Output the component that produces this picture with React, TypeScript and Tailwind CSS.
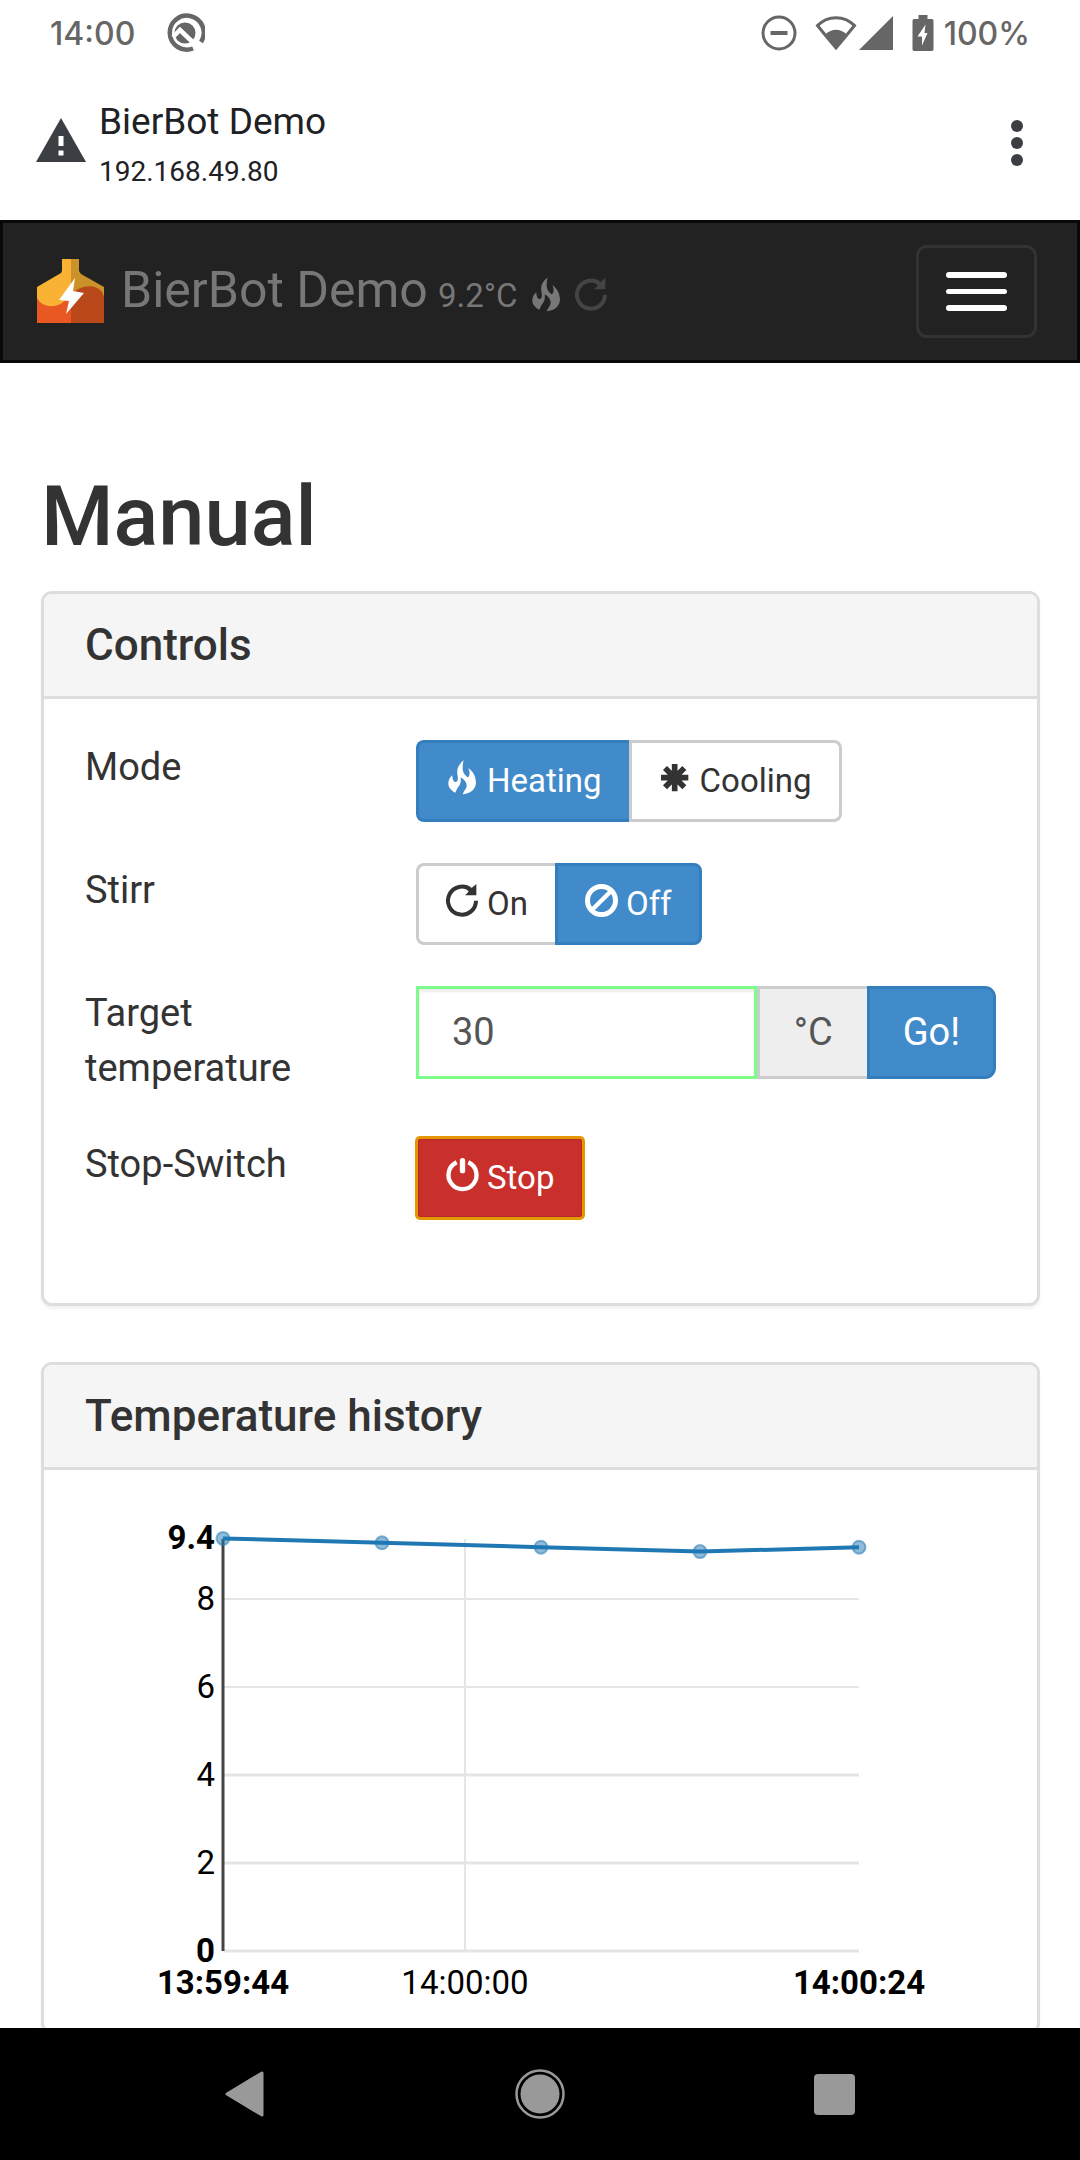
import { useState } from "react";
import type { ReactNode } from "react";

function FireIcon({ className }: { className: string }) {
  return (
    <svg viewBox="0 0 99 99" className={className} fill="currentColor" aria-hidden="true">
      <path
        transform="translate(7 -2)"
        d="M46 0C30 13 25 26 27 41C29 54 30 59 25 64C19 68 12 62 12 45C4 52 0 60 0 71C1 83 9 91 21 97C24 90 27 83 32 77C38 69 38 61 37 51C46 56 56 66 55 78C54 86 47 91 43 102C70 100 83 84 83 66C82 48 76 36 60 23C66 37 64 46 59 51C50 47 43 36 43 24C43 14 44 8 46 0Z"
      />
    </svg>
  );
}

function RepeatIcon({ className }: { className: string }) {
  return (
    <svg viewBox="0 0 99 99" className={className} aria-hidden="true">
      <path d="M90 50A42 42 0 1 1 74 17" fill="none" stroke="currentColor" strokeWidth="12" />
      <path d="M91 0V34H57L68 23L62 15L76 13Z" fill="currentColor" />
    </svg>
  );
}

function AsteriskIcon({ className }: { className: string }) {
  return (
    <svg viewBox="0 0 99 99" className={className} aria-hidden="true">
      <path d="M47 9V91M6 50H88M18 21L76 79M76 21L18 79" fill="none" stroke="currentColor" strokeWidth="17" />
    </svg>
  );
}

function BanIcon({ className }: { className: string }) {
  return (
    <svg viewBox="0 0 99 99" className={className} fill="none" stroke="currentColor" aria-hidden="true">
      <circle cx="49.5" cy="49.5" r="42" strokeWidth="15" />
      <path d="M20 79L79 20" strokeWidth="13" />
    </svg>
  );
}

function PowerIcon({ className }: { className: string }) {
  return (
    <svg viewBox="0 0 99 99" className={className} fill="none" stroke="currentColor" aria-hidden="true">
      <path d="M32 13A42 42 0 1 0 67 13" strokeWidth="13" />
      <path d="M49.5 8V38" strokeWidth="16" strokeLinecap="round" />
    </svg>
  );
}

function BrandLogo() {
  return (
    <svg viewBox="0 0 69 64" className="mb-0.5 h-16 w-[69px]" aria-hidden="true">
      <path d="M26 0H35V64H1V28L25 14L26 12Z" fill="#f9b234" />
      <path d="M35 0H43V12L45 15L68 28V64H35Z" fill="#ca9229" />
      <path d="M1 39C5 47 16 50 26 44L35 36V64H1Z" fill="#e95722" />
      <path d="M35 35C43 28 57 23 66 33L68 38V64H35Z" fill="#b9481a" />
      <path d="M39 19L23 41L33 42L30 55L48 34L37 32Z" fill="#fff" />
    </svg>
  );
}

function StatusBar() {
  return (
    <div className="flex h-[66px] shrink-0 items-center justify-between px-[50px] pt-0.5 font-[Inter,sans-serif] text-[32px] font-medium text-[#666]">
      <div className="flex items-center gap-[30px]">
        <span>14:00</span>
        <svg viewBox="0 0 40 40" className="mb-0.5 size-10" fill="none" aria-hidden="true">
          <path d="M36 29A17 17 0 1 0 28 35.5" stroke="#666" strokeWidth="4.5" />
          <circle cx="20" cy="20" r="10.5" fill="#666" />
          <path d="M8 24L15 17L36 37" stroke="#fff" strokeWidth="4.5" />
        </svg>
      </div>
      <div className="flex items-center">
        <svg viewBox="0 0 36 36" className="mb-0.5 size-9" fill="none" stroke="#666" aria-hidden="true">
          <circle cx="18" cy="18" r="16" strokeWidth="3" />
          <path d="M9.5 18H26.5" strokeWidth="4" />
        </svg>
        <svg viewBox="0 0 42 36" className="mb-0.5 ml-[18px] h-9 w-[42px]" aria-hidden="true">
          <path d="M2.5 10.5C13 0 29 0 39.5 10.5L31 21L21 33L11 21Z" fill="none" stroke="#666" strokeWidth="3" />
          <path d="M10 19.5C17 13 25 13 32 19.5L21 34Z" fill="#666" />
        </svg>
        <svg viewBox="0 0 36 36" className="mb-0.5 ml-px size-9" fill="#666" aria-hidden="true">
          <path d="M35 1V35H1Z" />
        </svg>
        <svg viewBox="0 0 22 36" className="mb-0.5 ml-[18px] h-9 w-[22px]" aria-hidden="true">
          <path d="M6.5 0H15.5V4H20Q21.5 4 21.5 6V34Q21.5 36 20 36H2Q.5 36 .5 34V6Q.5 4 2 4H6.5Z" fill="#666" />
          <path d="M13.5 9.5L5.5 21.5H10V30.5L15.5 18H12.5Z" fill="#fff" />
        </svg>
        <span className="ml-2.5">100%</span>
      </div>
    </div>
  );
}

function BrowserBar() {
  return (
    <div className="flex h-[154px] shrink-0 items-center pl-9 pr-7">
      <svg viewBox="0 0 50 44" className="mb-1.5 h-11 w-[50px]" aria-hidden="true">
        <path d="M25 0L50 44H0Z" fill="#3b3e43" />
        <path d="M22.5 18H27.5V28H22.5ZM22.5 32.5H27.5V37.5H22.5Z" fill="#fff" />
      </svg>
      <div className="ml-[13px] flex-1 pt-2 text-[#202124]">
        <div className="text-[37px] leading-[50px]">BierBot Demo</div>
        <div className="text-[28px] leading-[50px]">192.168.49.80</div>
      </div>
      <button type="button" aria-label="More options" className="flex w-[70px] flex-col items-center gap-[5px]">
        <span className="size-3 rounded-full bg-[#3b3e43]" />
        <span className="size-3 rounded-full bg-[#3b3e43]" />
        <span className="size-3 rounded-full bg-[#3b3e43]" />
      </button>
    </div>
  );
}

function Navbar() {
  return (
    <nav className="flex h-[143px] shrink-0 items-center justify-between border-[3px] border-[#080808] bg-[#222] pl-[33px] pr-10">
      <a href="#" className="flex items-center text-[#777]">
        <BrandLogo />
        <span className="ml-4 flex items-baseline">
          <span className="text-[50px] leading-[55px]">BierBot Demo</span>
          <span className="ml-2.5 text-[33px]">9.2°C</span>
          <FireIcon className="ml-3 size-[33px] translate-y-1 overflow-visible" />
          <RepeatIcon className="ml-3 size-[33px] translate-y-1 text-[#444]" />
        </span>
      </a>
      <button
        type="button"
        aria-label="Toggle navigation"
        className="flex flex-col gap-[11px] rounded-[11px] border-[3px] border-[#333] px-[27px] py-6"
      >
        <span className="h-1.5 w-[61px] rounded-sm bg-white" />
        <span className="h-[5px] w-[61px] rounded-sm bg-white" />
        <span className="h-1.5 w-[61px] rounded-sm bg-white" />
      </button>
    </nav>
  );
}

function Panel({ title, children }: { title: string; children: ReactNode }) {
  return (
    <section className="rounded-[11px] border-[3px] border-[#ddd] bg-white shadow-[0_3px_3px_rgba(0,0,0,0.05)]">
      <h2 className="rounded-t-lg border-b-[3px] border-[#ddd] bg-[#f5f5f5] px-[41px] py-[27px] text-[44px] font-medium leading-[48px]">
        {title}
      </h2>
      {children}
    </section>
  );
}

function Row({ label, htmlFor, children }: { label: string; htmlFor?: string; children: ReactNode }) {
  return (
    <div className="mb-[41px] grid grid-cols-[1fr_2fr]">
      <div className="min-w-0 px-[41px]">
        {htmlFor ? <label htmlFor={htmlFor}>{label}</label> : <span>{label}</span>}
      </div>
      <div className="min-w-0 px-[41px]">{children}</div>
    </div>
  );
}

type ToggleProps = {
  active: boolean;
  side: "left" | "right";
  icon: ReactNode;
  label: string;
  onClick: () => void;
};

function ToggleButton({ active, side, icon, label, onClick }: ToggleProps) {
  const shape = side === "left" ? "rounded-l-lg border-r-0" : "rounded-r-lg";
  const tone = active
    ? "border-[#357ebd] bg-[#428bca] text-white"
    : "border-[#ccc] bg-white text-[#333]";
  return (
    <button
      type="button"
      aria-pressed={active}
      onClick={onClick}
      className={`flex h-[82px] items-center gap-2 border-[3px] px-[27px] pb-0.5 text-[33px] ${shape} ${tone}`}
    >
      {icon}
      {label}
    </button>
  );
}

function Controls() {
  const [heating, setHeating] = useState(true);
  const [stirring, setStirring] = useState(false);
  const [target, setTarget] = useState("30");
  const icon = "mb-1.5 size-[33px] overflow-visible";
  return (
    <div className="pt-[41px] pb-[43px] text-[38px] leading-[55px]">
      <Row label="Mode">
        <div role="group" aria-label="Mode" className="flex">
          <ToggleButton active={heating} side="left" label="Heating" icon={<FireIcon className={icon} />} onClick={() => setHeating(true)} />
          <ToggleButton active={!heating} side="right" label="Cooling" icon={<AsteriskIcon className={icon} />} onClick={() => setHeating(false)} />
        </div>
      </Row>
      <Row label="Stirr">
        <div role="group" aria-label="Stirr" className="flex">
          <ToggleButton active={stirring} side="left" label="On" icon={<RepeatIcon className={icon} />} onClick={() => setStirring(true)} />
          <ToggleButton active={!stirring} side="right" label="Off" icon={<BanIcon className={icon} />} onClick={() => setStirring(false)} />
        </div>
      </Row>
      <Row label="Target temperature" htmlFor="target">
        <div className="flex h-[93px]">
          <input
            id="target"
            inputMode="numeric"
            value={target}
            onChange={(e) => setTarget(e.target.value)}
            className="min-w-0 flex-1 border-[3px] border-[#7cfc8a] bg-white px-[33px] text-[#555] shadow-[inset_0_3px_3px_rgba(0,0,0,0.075)] outline-none"
          />
          <span className="flex items-center border-y-[3px] border-l-[3px] border-[#ccc] bg-[#eee] px-[34px] text-[#555]">°C</span>
          <button type="button" className="rounded-r-[11px] border-[3px] border-[#357ebd] bg-[#428bca] px-[33px] text-white">
            Go!
          </button>
        </div>
      </Row>
      <Row label="Stop-Switch">
        <button
          type="button"
          className="flex h-[82px] items-center gap-2 rounded-sm border-[3px] border-[#b52b27] bg-[#c9302c] px-[27px] pb-0.5 text-[33px] text-white outline-[3px] -outline-offset-2 outline-[#e59700]"
        >
          <PowerIcon className={icon} />
          Stop
        </button>
      </Row>
    </div>
  );
}

const samples = [9.4, 9.3, 9.2, 9.1, 9.2];
const left = 138;
const right = 774;
const base = 440;
const perDegree = 44;
const toX = (i: number) => left + (i * (right - left)) / (samples.length - 1);
const toY = (v: number) => base - v * perDegree + 1;

function Chart() {
  return (
    <div className="px-[41px] pt-[41px] pb-5">
      <svg viewBox="0 0 911 500" className="w-full text-[33px]" role="img" aria-label="Temperature history">
        <g stroke="#e5e5e5">
          {[0, 2, 4, 6, 8].map((v) => (
            <line key={v} x1={left + 1} x2={right} y1={base - v * perDegree} y2={base - v * perDegree} strokeWidth={v < 5 ? 3 : 2} />
          ))}
          <line x1="380" x2="380" y1="28" y2={base} strokeWidth="2" />
        </g>
        <line x1={left} x2={left} y1="28" y2={base} stroke="#444" strokeWidth="3" />
        <g fill="#1f77b4" fillOpacity="0.5" stroke="#1f77b4" strokeOpacity="0.5" strokeWidth="2">
          {samples.map((v, i) => (
            <circle key={i} cx={toX(i)} cy={toY(v)} r="6.5" />
          ))}
        </g>
        <polyline points={samples.map((v, i) => `${toX(i)},${toY(v)}`).join(" ")} fill="none" stroke="#1f77b4" strokeWidth="4" />
        <g textAnchor="end" fill="#000">
          <text x="130" y="38" fontWeight="700">9.4</text>
          {[8, 6, 4, 2].map((v) => (
            <text key={v} x="130" y={base + 11 - v * perDegree}>{v}</text>
          ))}
          <text x="130" y="451" fontWeight="700">0</text>
        </g>
        <g textAnchor="middle" fill="#000">
          <text x={left} y="483" fontWeight="700">13:59:44</text>
          <text x="380" y="483">14:00:00</text>
          <text x={right} y="483" fontWeight="700">14:00:24</text>
        </g>
      </svg>
    </div>
  );
}

function SystemNav() {
  return (
    <div className="grid h-[132px] shrink-0 grid-cols-3 items-center bg-black px-[98px]">
      <button type="button" aria-label="Back" className="justify-self-center">
        <svg viewBox="0 0 40 46" className="h-[46px] w-10" aria-hidden="true">
          <path d="M37 2V44L2 23Z" fill="#999" stroke="#999" strokeWidth="3" strokeLinejoin="round" />
        </svg>
      </button>
      <button type="button" aria-label="Home" className="justify-self-center">
        <svg viewBox="0 0 50 50" className="size-[50px]" aria-hidden="true">
          <circle cx="25" cy="25" r="19.5" fill="#999" />
          <circle cx="25" cy="25" r="23.5" fill="none" stroke="#999" strokeWidth="2.5" />
        </svg>
      </button>
      <button type="button" aria-label="Recent apps" className="size-[41px] justify-self-center rounded bg-[#999]" />
    </div>
  );
}

export default function App() {
  return (
    <div className="flex h-screen flex-col overflow-hidden bg-white font-[Roboto,sans-serif] text-[#333]">
      <StatusBar />
      <BrowserBar />
      <Navbar />
      <main className="min-h-0 flex-1 overflow-hidden pl-[41px] pr-10 pt-[108px]">
        <h1 className="mb-7 text-[83px] font-medium leading-[92px]">Manual</h1>
        <div className="flex flex-col gap-14">
          <Panel title="Controls">
            <Controls />
          </Panel>
          <Panel title="Temperature history">
            <Chart />
          </Panel>
        </div>
      </main>
      <SystemNav />
    </div>
  );
}
